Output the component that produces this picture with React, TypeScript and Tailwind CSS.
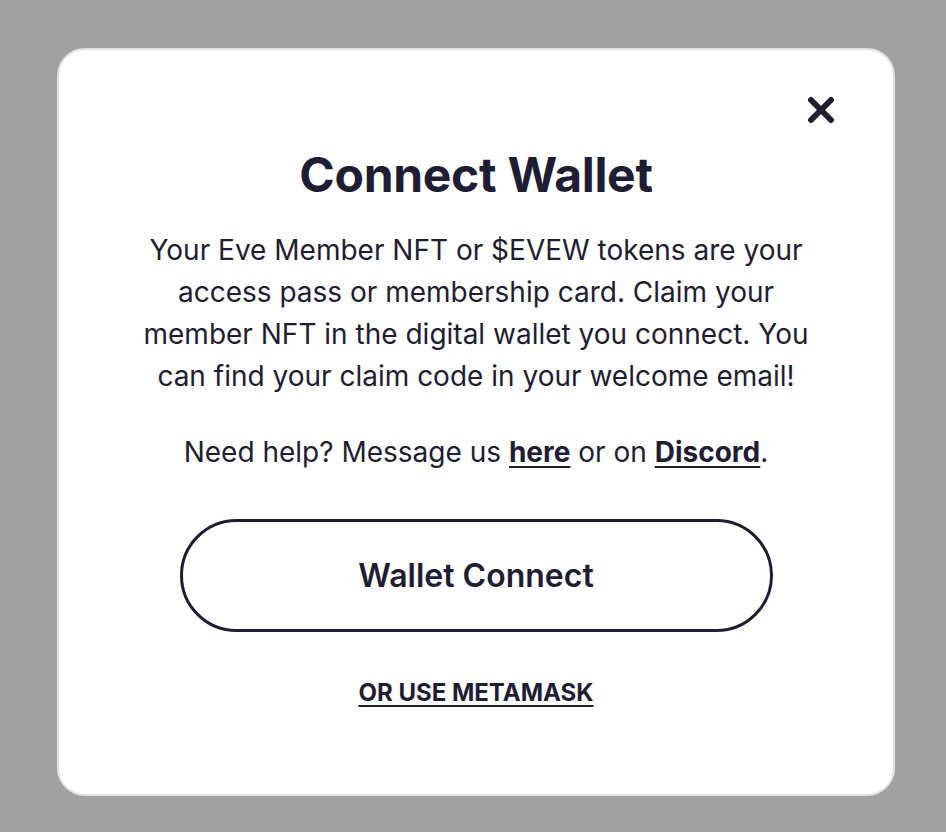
export default function App() {
  return (
    <div
      className="min-h-screen w-full bg-[#a1a1a1] pl-[57px] pt-[48px] text-[#1f1d33]"
      style={{ fontFamily: "Inter, 'Noto Sans', sans-serif" }}
    >
      <div className="relative flex h-[748px] w-[838px] flex-col items-center rounded-[28px] border-2 border-[#e2e2e2] bg-white">
        <button className="absolute right-[58px] top-[46px] h-[28px] w-[28px]" aria-label="Close">
          <svg viewBox="0 0 28 28" className="h-full w-full">
            <path d="M4 4 L24 24 M24 4 L4 24" stroke="#1f1d33" strokeWidth="6" strokeLinecap="round" />
          </svg>
        </button>

        <h1 className="mt-[97px] text-[48px] font-bold leading-[56px] tracking-[-0.3px]">Connect Wallet</h1>

        <p className="mt-[26px] w-[690px] text-center text-[28px] leading-[42px]">
          Your Eve Member NFT or $EVEW tokens are your access pass or membership card. Claim your member NFT in the
          digital wallet you connect. You can find your claim code in your welcome email!
        </p>

        <p className="mt-[34px] text-center text-[28px] leading-[42px]">
          Need help? Message us{" "}
          <a className="font-bold underline underline-offset-4" href="#">
            here
          </a>{" "}
          or on{" "}
          <a className="font-bold underline underline-offset-4" href="#">
            Discord
          </a>
          .
        </p>

        <button className="mt-[46px] h-[113px] w-[593px] rounded-full border-[3px] border-[#1f1d33] text-[32px] font-semibold">
          Wallet Connect
        </button>

        <a href="#" className="mt-[45px] text-[24px] font-bold leading-[32px] underline underline-offset-4">
          OR USE METAMASK
        </a>
      </div>
    </div>
  );
}
